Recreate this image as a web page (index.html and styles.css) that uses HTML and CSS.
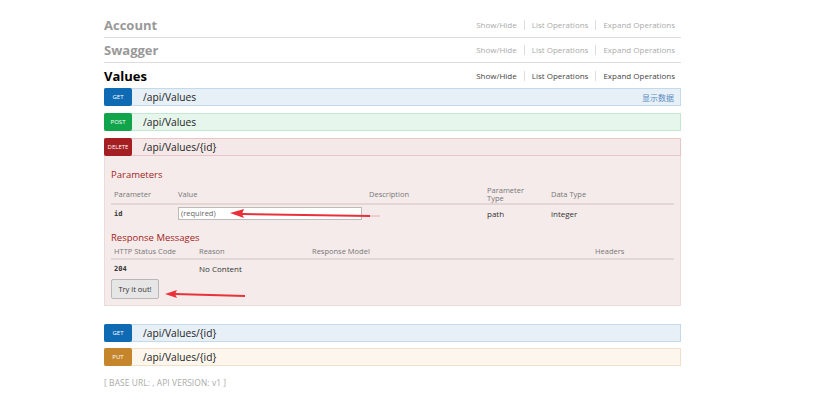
FILE: index.html
```html
<!DOCTYPE html>
<html>
<head>
<meta charset="utf-8">
<link rel="stylesheet" href="styles.css">
</head>
<body>
<div class="container">
  <div class="resource">
    <h2 class="res-title muted">Account</h2>
    <ul class="res-links muted"><li>Show/Hide</li><li>List Operations</li><li>Expand Operations</li></ul>
  </div>
  <div class="resource">
    <h2 class="res-title muted">Swagger</h2>
    <ul class="res-links muted"><li>Show/Hide</li><li>List Operations</li><li>Expand Operations</li></ul>
  </div>
  <div class="resource active">
    <h2 class="res-title">Values</h2>
    <ul class="res-links"><li>Show/Hide</li><li>List Operations</li><li>Expand Operations</li></ul>
  </div>

  <div class="op get">
    <span class="badge">GET</span><span class="path">/api/Values</span><span class="extra">显示数据</span>
  </div>
  <div class="op post">
    <span class="badge">POST</span><span class="path">/api/Values</span>
  </div>
  <div class="op-group delete">
    <div class="op delete-head">
      <span class="badge">DELETE</span><span class="path">/api/Values/{id}</span>
    </div>
    <div class="content">
      <h4 class="sec-title">Parameters</h4>
      <div class="ptable">
        <div class="prow phead">
          <span>Parameter</span><span>Value</span><span>Description</span><span>Parameter<br>Type</span><span>Data Type</span>
        </div>
        <div class="prow pbody">
          <span class="code">id</span><span><span class="input">(required)</span></span><span></span><span>path</span><span>integer</span>
        </div>
      </div>
      <h4 class="sec-title resp">Response Messages</h4>
      <div class="rtable">
        <div class="rrow rhead">
          <span>HTTP Status Code</span><span>Reason</span><span>Response Model</span><span>Headers</span>
        </div>
        <div class="rrow rbody">
          <span class="code">204</span><span>No Content</span><span></span><span></span>
        </div>
      </div>
      <button class="try">Try it out!</button>
    </div>
    <svg class="arrow arrow1" width="150" height="12" viewBox="0 0 150 12">
      <path d="M12 6 L140 8" stroke="#e8313a" stroke-width="2" fill="none"/>
      <path d="M140 8 L150 8" stroke="#f2a8ab" stroke-width="1" fill="none"/>
      <polygon points="0,5 14,1 12,6 14,10" fill="#e8313a"/>
    </svg>
    <svg class="arrow arrow2" width="82" height="10" viewBox="0 0 82 10">
      <path d="M10 4 L80 6" stroke="#e8313a" stroke-width="2" fill="none"/>
      <polygon points="0,4 12,0 10,4 12,8" fill="#e8313a"/>
    </svg>
  </div>

  <div class="op get second">
    <span class="badge">GET</span><span class="path">/api/Values/{id}</span>
  </div>
  <div class="op put">
    <span class="badge">PUT</span><span class="path">/api/Values/{id}</span>
  </div>

  <div class="footer">[ BASE URL: , API VERSION: v1 ]</div>
</div>
</body>
</html>
```
FILE: styles.css
```css
* { box-sizing: border-box; }
body {
  margin: 0;
  background: #fff;
  font-family: "Open Sans", "Noto Sans CJK SC", sans-serif;
  color: #333;
}
.container {
  width: 577px;
  margin-left: 104px;
  padding-top: 13px;
}
.resource {
  height: 25px;
  display: flex;
  align-items: center;
  justify-content: space-between;
  border-bottom: 1px solid #ddd;
}
.resource.active { border-bottom: none; }
.res-title {
  margin: 0;
  font-size: 13px;
  font-weight: 700;
  color: #000;
}
.res-title.muted { color: #999; }
.res-links {
  list-style: none;
  margin: 0;
  padding: 0;
  display: flex;
  font-size: 8px;
  color: #444;
}
.res-links.muted { color: #aaa; }
.res-links li {
  padding: 0 7px;
  border-left: 1px solid #ddd;
  line-height: 10px;
}
.res-links li:first-child { border-left: none; }
.res-links li:last-child { padding-right: 6px; }

.op {
  height: 18px;
  display: flex;
  align-items: center;
  border: 1px solid;
  border-left: none;
  margin-bottom: 7px;
}
.badge {
  width: 28px;
  height: 18px;
  margin-top: -1px;
  margin-bottom: -1px;
  display: flex;
  align-items: center;
  justify-content: center;
  color: #fff;
  font-size: 6px;
  text-transform: uppercase;
  border-radius: 2px;
}
.path {
  margin-left: 11px;
  font-size: 10.2px;
  color: #222;
  flex: 1;
}
.extra {
  font-size: 8px;
  color: #5a8bc4;
  margin-right: 6px;
}
.get { background: #e7f0f7; border-color: #c3d9ec; }
.get .badge { background: #0f6ab4; }
.post { background: #e7f6ec; border-color: #c3e8d1; }
.post .badge { background: #10a54a; }
.put { background: #fcf6ed; border-color: #f0e0ca; }
.put .badge { background: #c5862b; }
.delete-head { background: #f5e8e8; border-color: #e8c6c7; margin-bottom: 0; }
.delete-head .badge { background: #a41e22; }

.op-group { position: relative; margin-bottom: 18px; }
.second { margin-bottom: 6px; }
.content {
  background: #f5ebeb;
  border: 1px solid #eddada;
  border-top: none;
  padding: 12px 6px 0 6px;
  height: 150px;
}
.sec-title {
  margin: 0;
  height: 14px;
  line-height: 14px;
  font-size: 9.5px;
  font-weight: 400;
  color: #a41e22;
}
.sec-title.resp { margin-top: 9px; }
.ptable, .rtable { font-size: 7.5px; color: #777; }
.prow, .rrow {
  display: grid;
  align-items: center;
  padding-left: 3px;
}
.prow { grid-template-columns: 64px 191px 118px 64px 1fr; }
.rrow { grid-template-columns: 85px 113px 283px 1fr; }
.phead {
  height: 23px;
  border-bottom: 2px solid #e5d6d6;
  padding-top: 3px;
  line-height: 8.5px;
}
.rhead {
  height: 15px;
  border-bottom: 2px solid #e5d6d6;
  line-height: 9px;
}
.pbody { color: #333; font-size: 8px; height: 17px; }
.rbody { color: #333; font-size: 8px; height: 17px; }
.code { font-family: "DejaVu Sans Mono", monospace; font-size: 7px; font-weight: 700; color: #333; }
.input {
  display: block;
  width: 184px;
  height: 13px;
  background: #fff;
  border: 1px solid #bbb;
  font-size: 7.5px;
  color: #666;
  padding-left: 2px;
  line-height: 11px;
  font-family: "Open Sans", sans-serif;
}
.try {
  display: block;
  margin-top: 2px;
  width: 48px;
  height: 20px;
  font-family: "Open Sans", sans-serif;
  font-size: 7.5px;
  color: #333;
  background: #e6e6e6;
  border: 1px solid #b8b8b8;
  border-radius: 2px;
  padding: 0;
}
.arrow { position: absolute; }
.arrow1 { left: 126px; top: 70px; }
.arrow2 { left: 61px; top: 152px; }

.footer {
  margin-top: 11px;
  font-size: 8.4px;
  color: #aaa;
  letter-spacing: 0.1px;
}
```
